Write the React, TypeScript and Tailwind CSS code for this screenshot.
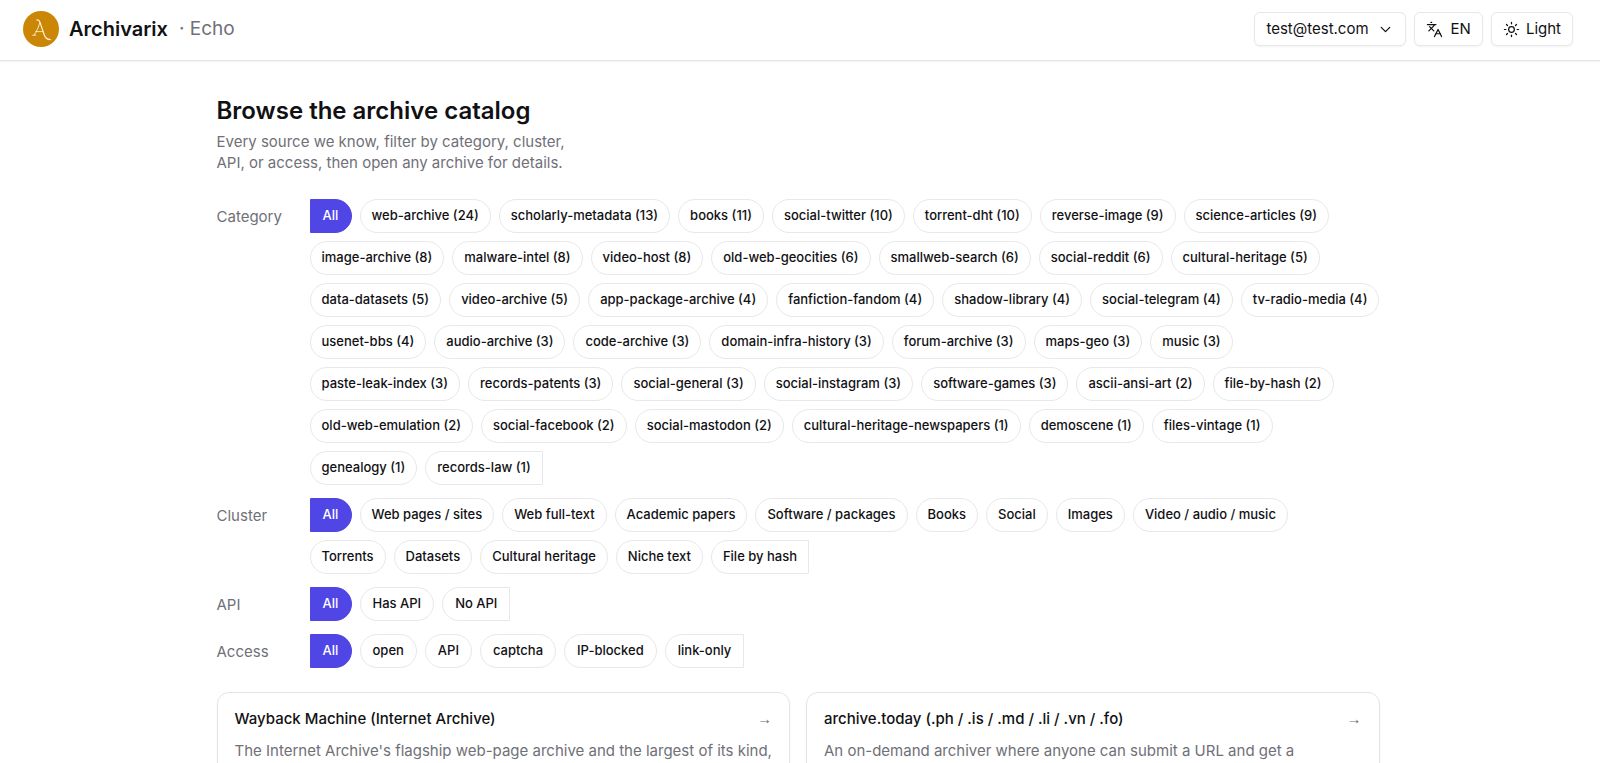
import { useState } from 'react';
import { ChevronDown, Languages, Sun } from 'lucide-react';

interface Filter {
  label: string;
  options: string[];
  className?: string;
  chipPadding: string;
}

interface Archive {
  name: string;
  description: string;
}

const filters: Filter[] = [
  {
    label: 'Category',
    options: [
      'web-archive (24)',
      'scholarly-metadata (13)',
      'books (11)',
      'social-twitter (10)',
      'torrent-dht (10)',
      'reverse-image (9)',
      'science-articles (9)',
      'image-archive (8)',
      'malware-intel (8)',
      'video-host (8)',
      'old-web-geocities (6)',
      'smallweb-search (6)',
      'social-reddit (6)',
      'cultural-heritage (5)',
      'data-datasets (5)',
      'video-archive (5)',
      'app-package-archive (4)',
      'fanfiction-fandom (4)',
      'shadow-library (4)',
      'social-telegram (4)',
      'tv-radio-media (4)',
      'usenet-bbs (4)',
      'audio-archive (3)',
      'code-archive (3)',
      'domain-infra-history (3)',
      'forum-archive (3)',
      'maps-geo (3)',
      'music (3)',
      'paste-leak-index (3)',
      'records-patents (3)',
      'social-general (3)',
      'social-instagram (3)',
      'software-games (3)',
      'ascii-ansi-art (2)',
      'file-by-hash (2)',
      'old-web-emulation (2)',
      'social-facebook (2)',
      'social-mastodon (2)',
      'cultural-heritage-newspapers (1)',
      'demoscene (1)',
      'files-vintage (1)',
      'genealogy (1)',
      'records-law (1)',
    ],
    chipPadding: 'px-[11px]',
  },
  {
    label: 'Cluster',
    options: [
      'Web pages / sites',
      'Web full-text',
      'Academic papers',
      'Software / packages',
      'Books',
      'Social',
      'Images',
      'Video / audio / music',
      'Torrents',
      'Datasets',
      'Cultural heritage',
      'Niche text',
      'File by hash',
    ],
    className: 'pr-5',
    chipPadding: 'px-[11px]',
  },
  { label: 'API', options: ['Has API', 'No API'], chipPadding: 'px-3' },
  { label: 'Access', options: ['open', 'API', 'captcha', 'IP-blocked', 'link-only'], chipPadding: 'px-3' },
];

const archives: Archive[] = [
  {
    name: 'Wayback Machine (Internet Archive)',
    description: "The Internet Archive's flagship web-page archive and the largest of its kind,",
  },
  {
    name: 'archive.today (.ph / .is / .md / .li / .vn / .fo)',
    description: 'An on-demand archiver where anyone can submit a URL and get a',
  },
];

const headerButton =
  'flex items-center h-[34px] px-[11px] pt-0.5 rounded-md border border-[#e8e8ea] bg-white text-[15px] text-[#111114] shadow-xs hover:bg-gray-50';

function Logo() {
  return (
    <svg viewBox="0 0 36 36" className="w-9 h-9" fill="none" aria-hidden="true">
      <circle cx="18" cy="18" r="18" fill="#ca8604" />
      <g stroke="#fff3d6" strokeLinecap="round" strokeLinejoin="round">
        <path d="M13.8 9c1.8-.4 2.6.6 3.2 2.4l4.2 12.4c.9 2.8 2.6 4.8 6.2 4.8" strokeWidth="1.2" />
        <path d="M16.9 11.6c-1.4 4.6-3.2 8.8-5.6 12.4" strokeWidth="0.9" />
        <path d="M9.6 24.2h3.2M12.8 20.6h7" strokeWidth="0.8" />
      </g>
    </svg>
  );
}

function FilterRow({ label, options, className = '', chipPadding }: Filter) {
  const [selected, setSelected] = useState('All');

  return (
    <div role="group" aria-label={label} className="flex items-start">
      <span className="w-[93px] shrink-0 pt-[7px] text-[15px] leading-[22px] text-[#707078]">{label}</span>
      <div className={`flex flex-1 flex-wrap gap-2 ${className}`}>
        {['All', ...options].map((option) => (
          <button
            key={option}
            aria-pressed={selected === option}
            onClick={() => setSelected(option)}
            className={`h-[34px] min-w-[42px] ${chipPadding} border text-[13px] font-medium rounded-full first:rounded-l-none last:rounded-r-none transition-colors ${
              selected === option
                ? 'bg-[#4f46e5] border-[#4f46e5] text-white'
                : 'bg-white border-[#e8e8ea] text-[#111114] hover:bg-gray-50'
            }`}
          >
            {option}
          </button>
        ))}
      </div>
    </div>
  );
}

export default function App() {
  return (
    <div className="min-h-screen bg-white font-['Inter',sans-serif] text-[#111114]">
      <header className="flex items-center justify-between h-[61px] pl-[23px] pr-[27px] pb-[3px] border-b border-[#e4e4e7] shadow-xs">
        <a href="#" className="flex items-center">
          <Logo />
          <span className="ml-2.5 text-xl font-semibold">Archivarix</span>
          <span className="ml-[11px] pt-0.5 text-[19px] text-[#707078]">· Echo</span>
        </a>
        <div className="flex items-center gap-2">
          <button className={`${headerButton} gap-2`}>
            test@test.com
            <ChevronDown className="w-[17px] h-[17px]" strokeWidth={1.75} />
          </button>
          <button className={`${headerButton} gap-2`}>
            <Languages className="w-[17px] h-[17px]" strokeWidth={1.75} />
            EN
          </button>
          <button className={`${headerButton} gap-1.5`}>
            <Sun className="w-[17px] h-[17px]" strokeWidth={1.75} />
            Light
          </button>
        </div>
      </header>

      <main className="pl-4 pr-5 pt-8">
        <div className="max-w-[1163px] mx-auto">
          <h1 className="text-2xl leading-9 font-semibold">Browse the archive catalog</h1>
          <p className="mt-0.5 max-w-[360px] text-[15px] leading-[21px] text-[#707078]">
            Every source we know, filter by category, cluster, API, or access, then open any archive for details.
          </p>

          <div className="mt-[26px] flex flex-col gap-[13px]">
            {filters.map((filter) => (
              <FilterRow key={filter.label} {...filter} />
            ))}
          </div>

          <div className="mt-6 grid grid-cols-2 gap-4">
            {archives.map((archive) => (
              <a
                key={archive.name}
                href="#"
                className="block rounded-xl border border-[#e4e4e7] px-[17px] py-[15px] shadow-xs hover:border-gray-300"
              >
                <div className="flex items-center justify-between">
                  <h2 className="text-[15px] leading-[22px] font-medium">{archive.name}</h2>
                  <span className="font-['Liberation_Sans',sans-serif] text-[15px] leading-[22px] text-[#707078]">→</span>
                </div>
                <p className="mt-2.5 text-[15px] leading-[22px] text-[#707078]">{archive.description}</p>
              </a>
            ))}
          </div>
        </div>
      </main>
    </div>
  );
}
